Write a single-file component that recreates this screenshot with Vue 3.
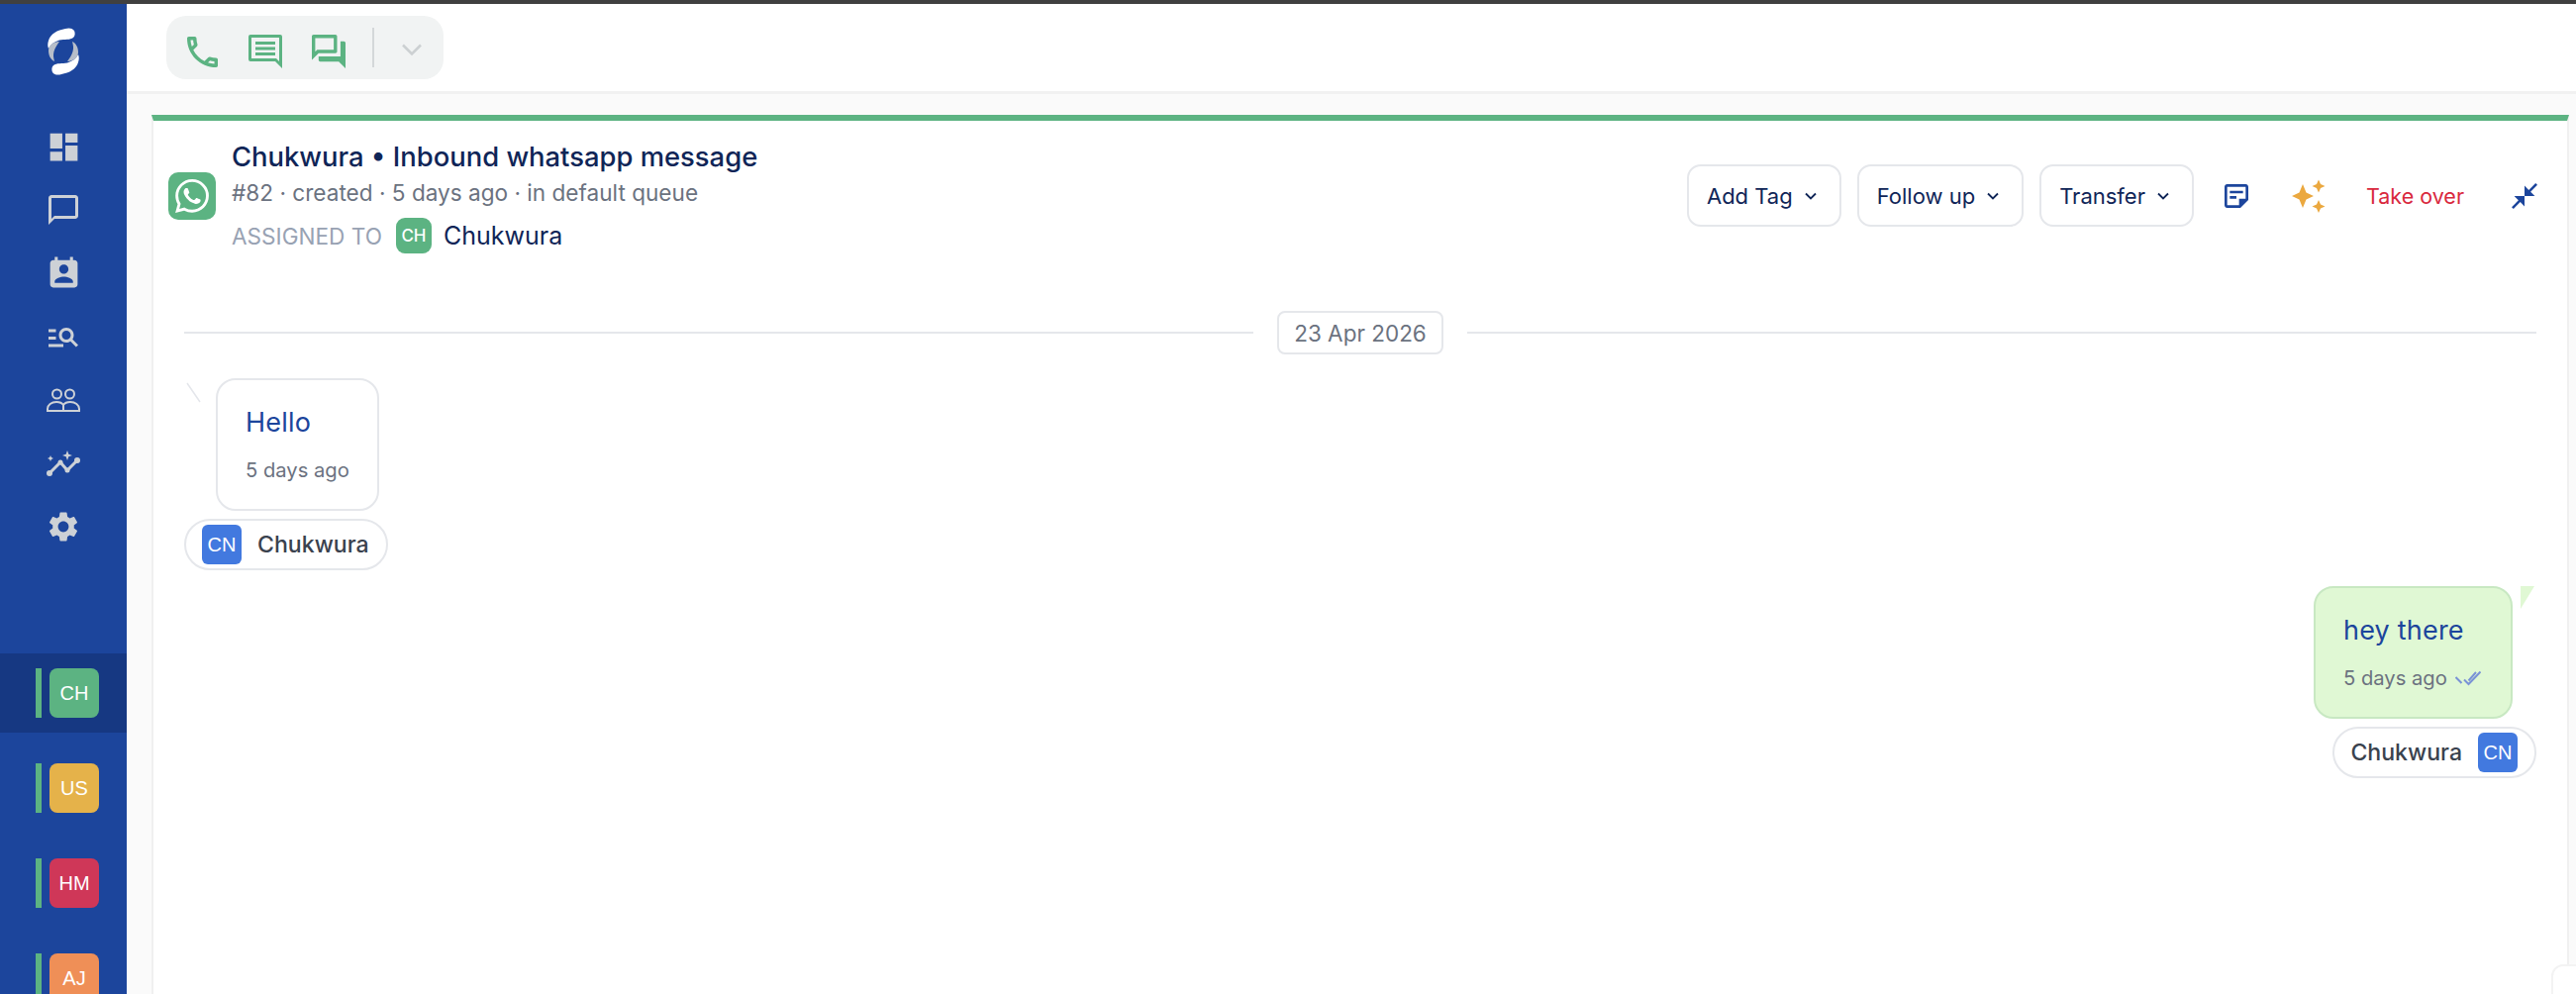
<script setup>
const navIcons = [
  { w: 37, path: 'M3 13h8V3H3v10zm0 8h8v-6H3v6zm10 0h8V11h-8v10zm0-18v6h8V3h-8z' },
  { w: 36, path: 'M20 2H4c-1.1 0-2 .9-2 2v18l4-4h14c1.1 0 2-.9 2-2V4c0-1.1-.9-2-2-2zm0 14H6l-2 2V4h16v12z' },
  { w: 37, path: 'M19 3h-1V1h-2v2H8V1H6v2H5c-1.11 0-2 .9-2 2v14c0 1.1.89 2 2 2h14c1.1 0 2-.9 2-2V5c0-1.1-.9-2-2-2zm-7 3c1.66 0 3 1.34 3 3s-1.34 3-3 3-3-1.34-3-3 1.34-3 3-3zm6 12H6v-1c0-2 4-3.1 6-3.1s6 1.1 6 3.1v1z' },
  { w: 36, path: 'M7 9H2V7h5v2zm0 3H2v2h5v-2zm13.59 7l-3.83-3.83c-.8.52-1.74.83-2.76.83-2.76 0-5-2.24-5-5s2.24-5 5-5 5 2.24 5 5c0 1.02-.31 1.96-.83 2.75L22 17.59 20.59 19zM17 11c0-1.65-1.35-3-3-3s-3 1.35-3 3 1.35 3 3 3 3-1.35 3-3zM2 19h10v-2H2v2z' }
]
const agents = [
  { id: 'CH', color: '#5cb382', active: true },
  { id: 'US', color: '#e5b24a' },
  { id: 'HM', color: '#cf3758' },
  { id: 'AJ', color: '#ef8f57' }
]
const actions = ['Add Tag', 'Follow up', 'Transfer']
const gear = 'M19.14 12.94c.04-.3.06-.61.06-.94 0-.32-.02-.64-.07-.94l2.03-1.58c.18-.14.23-.41.12-.61l-1.92-3.32c-.12-.22-.37-.29-.59-.22l-2.39.96c-.5-.38-1.03-.7-1.62-.94l-.36-2.54c-.04-.24-.24-.41-.48-.41h-3.84c-.24 0-.43.17-.47.41l-.36 2.54c-.59.24-1.13.57-1.62.94l-2.39-.96c-.22-.08-.47 0-.59.22L2.74 8.87c-.12.21-.08.47.12.61l2.03 1.58c-.05.3-.09.63-.09.94s.02.64.07.94l-2.03 1.58c-.18.14-.23.41-.12.61l1.92 3.32c.12.22.37.29.59.22l2.39-.96c.5.38 1.03.7 1.62.94l.36 2.54c.05.24.24.41.48.41h3.84c.24 0 .44-.17.47-.41l.36-2.54c.59-.24 1.13-.56 1.62-.94l2.39.96c.22.08.47 0 .59-.22l1.92-3.32c.12-.22.07-.47-.12-.61l-2.01-1.58zM12 15.6c-1.98 0-3.6-1.62-3.6-3.6s1.62-3.6 3.6-3.6 3.6 1.62 3.6 3.6-1.62 3.6-3.6 3.6z'
const whatsapp = 'M17.472 14.382c-.297-.149-1.758-.867-2.03-.967-.273-.099-.471-.148-.67.15-.197.297-.767.966-.94 1.164-.173.199-.347.223-.644.075-.297-.15-1.255-.463-2.39-1.475-.883-.788-1.48-1.761-1.653-2.059-.173-.297-.018-.458.13-.606.134-.133.298-.347.446-.52.149-.174.198-.298.298-.497.099-.198.05-.371-.025-.52-.075-.149-.669-1.612-.916-2.207-.242-.579-.487-.5-.669-.51-.173-.008-.371-.01-.57-.01-.198 0-.52.074-.792.372-.272.297-1.04 1.016-1.04 2.479 0 1.462 1.065 2.875 1.213 3.074.149.198 2.096 3.2 5.077 4.487.709.306 1.262.489 1.694.625.712.227 1.36.195 1.871.118.571-.085 1.758-.719 2.006-1.413.248-.694.248-1.289.173-1.413-.074-.124-.272-.198-.57-.347m-5.421 7.403h-.004a9.87 9.87 0 01-5.031-1.378l-.361-.214-3.741.982.998-3.648-.235-.374a9.86 9.86 0 01-1.51-5.26c.001-5.45 4.436-9.884 9.888-9.884 2.64 0 5.122 1.03 6.988 2.898a9.825 9.825 0 012.893 6.994c-.003 5.45-4.437 9.884-9.885 9.884m8.413-18.297A11.815 11.815 0 0012.05 0C5.495 0 .16 5.335.157 11.892c0 2.096.547 4.142 1.588 5.945L.057 24l6.305-1.654a11.882 11.882 0 005.683 1.448h.005c6.554 0 11.89-5.335 11.893-11.893a11.821 11.821 0 00-3.48-8.413Z'
</script>

<template>
  <div class="app">
    <div class="strip"></div>
    <div class="shell">
      <aside class="side">
        <svg class="logo" viewBox="0 0 32 48" width="32" height="48">
          <g>
            <path d="M27 3C25 0 21 0 18 1C10 2.500 3 6 1 13C0 16 0 19 1 21C3 17 7 14 12 12.500C17 11.500 23 12.500 26 10C28 8.500 28 5 27 3Z" fill="#fff" />
            <path d="M12 14C6 14 1 18 1 23C1 28 3 32 7 34C6 30 5.500 28 6.500 24C7.500 20 10 17 12 14Z" fill="#b7bec9" />
          </g>
          <g transform="rotate(180 16 24)">
            <path d="M27 3C25 0 21 0 18 1C10 2.500 3 6 1 13C0 16 0 19 1 21C3 17 7 14 12 12.500C17 11.500 23 12.500 26 10C28 8.500 28 5 27 3Z" fill="#fff" />
            <path d="M12 14C6 14 1 18 1 23C1 28 3 32 7 34C6 30 5.500 28 6.500 24C7.500 20 10 17 12 14Z" fill="#b7bec9" />
          </g>
        </svg>
        <nav class="nav">
          <div v-for="(n, i) in navIcons" :key="i" class="nav-item">
            <svg viewBox="0 0 24 24" :width="n.w" :height="n.w" fill="#cdd1d6"><path :d="n.path" /></svg>
          </div>
          <div class="nav-item">
            <svg viewBox="0 0 34 24" width="34" height="24" fill="none" stroke="#cdd1d6" stroke-width="2">
              <circle cx="10.500" cy="6" r="4.500" />
              <circle cx="23.500" cy="6" r="4.500" />
              <path d="M1 23v-2c0-4 4-7 9-7 3.500 0 6 1.500 7 3 1-1.500 3.500-3 7-3 5 0 9 3 9 7v2zM17 17v6" />
            </svg>
          </div>
          <div class="nav-item">
            <svg viewBox="0 0 34 26" width="34" height="26" fill="#cdd1d6">
              <path d="M3 23 14 12 21 20 30 11" fill="none" stroke="#cdd1d6" stroke-width="3" />
              <circle cx="3" cy="23" r="3" /><circle cx="14" cy="12" r="2.500" /><circle cx="21" cy="20" r="2.500" /><circle cx="31" cy="10" r="3" />
              <path d="M21 0l1.300 3.700L26 5l-3.700 1.300L21 10l-1.300-3.700L16 5l3.700-1.300zM4 5l.9 2.100L7 8l-2.100.9L4 11l-.9-2.100L1 8l2.100-.9z" />
            </svg>
          </div>
          <div class="nav-item">
            <svg viewBox="0 0 24 24" width="36" height="36" fill="#cdd1d6"><path :d="gear" /></svg>
          </div>
        </nav>
        <div class="agents">
          <div v-for="a in agents" :key="a.id" class="agent" :class="{ active: a.active }">
            <span class="agent-bar"></span>
            <span class="agent-av" :style="{ background: a.color }">{{ a.id }}</span>
          </div>
        </div>
      </aside>

      <main class="main">
        <header class="topbar">
          <div class="tools">
            <svg class="t-phone" viewBox="3 3 18 18" width="31" height="31" fill="#5cb382"><path d="M6.540 5c.06.89.21 1.760.45 2.590l-1.200 1.200c-.41-1.200-.67-2.470-.76-3.790h1.510m9.860 12.020c.85.24 1.720.39 2.600.45v1.490c-1.320-.09-2.590-.35-3.800-.75l1.200-1.190M7.500 3H4c-.55 0-1 .45-1 1 0 9.390 7.610 17 17 17 .55 0 1-.45 1-1v-3.490c0-.55-.45-1-1-1-1.240 0-2.450-.2-3.570-.57-.1-.04-.21-.05-.31-.05-.26 0-.51.1-.71.29l-2.200 2.200c-2.830-1.450-5.150-3.760-6.590-6.590l2.200-2.200c.28-.28.36-.67.25-1.020C8.700 6.450 8.500 5.250 8.500 4c0-.55-.45-1-1-1z" /></svg>
            <svg class="t-msg" viewBox="0 0 34 34" width="34" height="34" fill="#5cb382" fill-rule="evenodd"><path d="M2 0h30a2 2 0 0 1 2 2v32l-7-7H2a2 2 0 0 1-2-2V2a2 2 0 0 1 2-2zM3 3v21h25l3 3V3z" /><path d="M7 7h20v3H7zM7 12.500h20v3H7zM7 18h20v3H7z" /></svg>
            <svg class="t-forum" viewBox="2 2 20 20" width="34" height="34" fill="#5cb382"><path d="M15 4v7H5.170L4 12.170V4h11m1-2H3c-.55 0-1 .45-1 1v14l4-4h10c.55 0 1-.45 1-1V3c0-.55-.45-1-1-1zm5 4h-2v9H6v2c0 .55.45 1 1 1h11l4 4V7c0-.55-.45-1-1-1z" /></svg>
            <span class="t-div"></span>
            <svg class="t-chev" viewBox="0 0 20 12" width="20" height="12" fill="none" stroke="#ccd0d2" stroke-width="2.500"><path d="M1 1.500l9 9 9-9" /></svg>
          </div>
        </header>

        <section class="body">
          <article class="card">
            <div class="head">
              <span class="wa">
                <svg viewBox="0 0 24 24" width="34" height="34" fill="#fff"><path :d="whatsapp" /></svg>
              </span>
              <div class="head-text">
                <div class="title">Chukwura • Inbound whatsapp message</div>
                <div class="sub">#82 · created · 5 days ago · in default queue</div>
                <div class="assign">
                  <span class="assign-label">ASSIGNED TO</span>
                  <span class="assign-av">CH</span>
                  <span class="assign-name">Chukwura</span>
                </div>
              </div>
              <div class="actions">
                <button v-for="a in actions" :key="a" class="btn">
                  {{ a }}
                  <svg viewBox="0 0 12 8" width="12" height="8" fill="none" stroke="#0f2557" stroke-width="1.800"><path d="M1 1.500l5 5 5-5" /></svg>
                </button>
                <svg class="a-note" viewBox="3 3 18 18" width="24" height="24" fill="#1c459c"><path d="M19 5v9h-5v5H5V5h14m0-2H5C3.900 3 3 3.900 3 5v14c0 1.100.9 2 2 2h10l6-6V5c0-1.100-.9-2-2-2zM12 14H7v-2h5v2zm5-4H7V8h10v2z" /></svg>
                <svg class="a-spark" viewBox="0 0 34 34" width="34" height="34" fill="#eba83f"><path d="M11 5l3.500 8.500L22 17l-7.500 3.500L11 29l-3.500-8.500L0 17l7.500-3.500zM27 0.500l2 4.500 4.500 2-4.500 2-2 4.500-2-4.500-4.500-2 4.500-2zM27 21l2 4.500 4.500 2-4.500 2-2 4.500-2-4.500-4.500-2 4.500-2z" /></svg>
                <span class="takeover">Take over</span>
                <svg class="a-shrink" viewBox="2 2 20 20" width="26" height="26" fill="#1c459c"><path d="M22 3.410l-5.290 5.290L20 12h-8V4l3.290 3.290L20.590 2 22 3.410zM3.410 22l5.290-5.290L12 20v-8H4l3.290 3.290L2 20.590 3.410 22z" /></svg>
              </div>
            </div>

            <div class="thread">
              <div class="date">
                <span class="rule"></span>
                <span class="date-pill">23 Apr 2026</span>
                <span class="rule"></span>
              </div>

              <div class="msg in">
                <div class="bubble bubble-in">
                  <svg class="tail-in" viewBox="0 0 16 22" width="16" height="22" fill="none" stroke="#e4e6eb" stroke-width="1.500"><path d="M1 1l13 19" /></svg>
                  <div class="text">Hello</div>
                  <div class="time">5 days ago</div>
                </div>
                <div class="chip">
                  <span class="chip-av">CN</span>
                  <span class="chip-name">Chukwura</span>
                </div>
              </div>

              <div class="msg out">
                <div class="bubble bubble-out">
                  <svg class="tail-out" viewBox="0 0 14 23" width="14" height="23" fill="#e0f8d4"><path d="M0 0h14L0 23z" /></svg>
                  <div class="text">hey there</div>
                  <div class="time">5 days ago
                    <svg viewBox="0 0 26 16" width="26" height="16" fill="none" stroke="#7a93d6" stroke-width="2"><path d="M0.500 7l6 6M9 9.500l4.500 4.500L25.500 1.500M13.500 10.500L21 2" /></svg>
                  </div>
                </div>
                <div class="chip">
                  <span class="chip-name">Chukwura</span>
                  <span class="chip-av">CN</span>
                </div>
              </div>
            </div>
          </article>
        </section>
      </main>
    </div>
    <div class="corner"></div>
  </div>
</template>

<style>
html, body { margin: 0; background: #fff; overflow: hidden; }
</style>

<style scoped>
.app {
  position: relative;
  height: 1004px;
  display: flex;
  flex-direction: column;
  overflow: hidden;
  font-family: Inter, "Liberation Sans", sans-serif;
}
.strip { height: 4px; background: #404040; flex: none; }
.shell { flex: 1; display: flex; min-height: 0; }

.side {
  width: 128px;
  flex: none;
  background: #1c459c;
  display: flex;
  flex-direction: column;
  align-items: stretch;
  overflow: hidden;
}
.logo { margin: 24px auto 0; display: block; flex: none; }
.nav { margin-top: 40px; display: flex; flex-direction: column; flex: none; }
.nav-item { height: 64px; display: flex; align-items: center; justify-content: center; }
.agents { margin-top: 96px; display: flex; flex-direction: column; gap: 16px; flex: none; }
.agent {
  height: 80px;
  flex: none;
  display: flex;
  align-items: center;
  padding-left: 36px;
  gap: 8px;
}
.agent.active { background: #163882; }
.agent-bar { width: 6px; height: 50px; background: #5cb382; }
.agent-av {
  width: 50px;
  height: 50px;
  border-radius: 8px;
  display: flex;
  align-items: center;
  justify-content: center;
  color: #fff;
  font: 20px "Liberation Sans", sans-serif;
}

.main { flex: 1; min-width: 0; display: flex; flex-direction: column; }
.topbar {
  height: 91px;
  flex: none;
  box-sizing: border-box;
  padding: 12px 0 0 40px;
  background: #fff;
  border-bottom: 3px solid #f1f1f1;
}
.tools {
  width: 280px;
  height: 64px;
  box-sizing: border-box;
  padding-left: 21px;
  background: #f1f3f3;
  border-radius: 20px;
  display: flex;
  align-items: center;
}
.t-phone { margin-top: 8px; }
.t-msg { margin-left: 31px; margin-top: 7px; }
.t-forum { margin-left: 30px; margin-top: 7px; }
.t-div { width: 2px; height: 40px; background: #d4d7d9; margin-left: 27px; }
.t-chev { margin-left: 28px; margin-top: 4px; }

.body {
  flex: 1;
  min-height: 0;
  background: #fafafa;
  padding: 21px 7px 0 25px;
}
.card {
  height: 100%;
  box-sizing: border-box;
  background: #fff;
  border-top: 6px solid #5cb382;
  border-left: 2px solid #f0f0f0;
  border-right: 2px solid #f0f0f0;
}

.head { display: flex; align-items: flex-start; padding: 16px 30px 0 15px; height: 172px; box-sizing: border-box; }
.wa {
  width: 48px;
  height: 48px;
  border-radius: 10px;
  background: #5cb382;
  display: flex;
  align-items: center;
  justify-content: center;
  margin-top: 36px;
  flex: none;
}
.head-text { margin-left: 16px; }
.title { font-size: 27.4px; line-height: 40px; font-weight: 500; color: #0f2557; white-space: nowrap; }
.sub { font-size: 22.6px; line-height: 33px; color: #6b7280; white-space: nowrap; }
.assign { display: flex; align-items: center; margin-top: 9px; }
.assign-label { font-size: 22.6px; color: #98a2b3; white-space: nowrap; }
.assign-av {
  width: 36px;
  height: 36px;
  margin-left: 14px;
  border-radius: 9px;
  background: #5cb382;
  color: #fff;
  font-size: 17px;
  font-weight: 500;
  display: flex;
  align-items: center;
  justify-content: center;
}
.assign-name { margin-left: 12px; font-size: 25px; color: #0f2557; }

.actions { margin-left: auto; display: flex; align-items: center; margin-top: 28px; }
.btn {
  height: 63px;
  box-sizing: border-box;
  padding: 0 23px 0 18px;
  margin-right: 16px;
  border: 2px solid #e5e7eb;
  border-radius: 14px;
  background: #fff;
  color: #0f2557;
  font: 22px Inter, "Liberation Sans", sans-serif;
  display: flex;
  align-items: center;
  gap: 12px;
  white-space: nowrap;
}
.a-note { margin-left: 15px; }
.a-spark { margin-left: 44px; }
.takeover { margin-left: 41px; font-size: 21.5px; color: #d9283d; white-space: nowrap; }
.a-shrink { margin-left: 48px; }

.thread { padding: 20px 31px 0; }
.date { display: flex; align-items: center; gap: 24px; height: 44px; }
.rule { flex: 1; height: 2px; background: #e5e7eb; }
.date-pill {
  height: 44px;
  box-sizing: border-box;
  width: 168px;
  border: 2px solid #e5e7eb;
  border-radius: 8px;
  display: flex;
  align-items: center;
  justify-content: center;
  font-size: 22.5px;
  color: #6b7280;
}

.msg { display: flex; flex-direction: column; }
.msg.in { align-items: flex-start; margin-top: 24px; }
.msg.out { align-items: flex-end; margin-top: 16px; }
.bubble {
  position: relative;
  box-sizing: border-box;
  height: 134px;
  padding: 26px 28px 0;
  border-radius: 20px;
  border: 2px solid #e5e7eb;
}
.bubble-in { margin-left: 32px; width: 165px; background: #fff; }
.bubble-out { margin-right: 24px; width: 201px; background: #e0f8d4; border-color: #c8e8c2; }
.tail-in { position: absolute; left: -32px; top: 2px; }
.tail-out { position: absolute; right: -24px; top: -2px; }
.text { font-size: 27px; line-height: 34px; color: #1c459c; white-space: nowrap; letter-spacing: .2px; }
.time {
  margin-top: 17px;
  font-size: 20.2px;
  line-height: 28px;
  color: #6b7280;
  white-space: nowrap;
  display: flex;
  align-items: center;
  gap: 8px;
}
.chip {
  margin-top: 8px;
  height: 52px;
  box-sizing: border-box;
  border: 2px solid #e5e7eb;
  border-radius: 26px;
  padding: 0 17px 0 16px;
  display: flex;
  align-items: center;
  gap: 16px;
  background: #fff;
}
.chip-av {
  width: 40px;
  height: 40px;
  border-radius: 6px;
  background: #4279df;
  color: #fff;
  font: 20px "Liberation Sans", sans-serif;
  display: flex;
  align-items: center;
  justify-content: center;
}
.chip-name { font-size: 23.1px; font-weight: 500; color: #3a424e; }

.corner {
  position: absolute;
  left: 2577px;
  top: 974px;
  width: 60px;
  height: 60px;
  box-sizing: border-box;
  background: #fff;
  border: 2px solid #f3f3f3;
  border-radius: 12px;
}
</style>
